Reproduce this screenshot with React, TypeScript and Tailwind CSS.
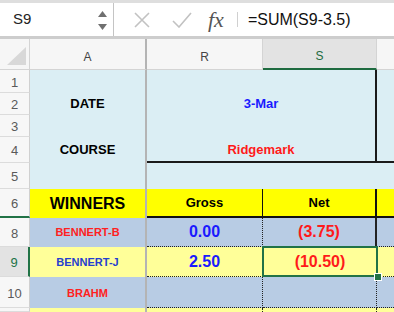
import React from "react";

function RowH({ n, row, extra = "" }: { n: string; row: string; extra?: string }) {
  return (
    <div
      className={`col-start-1 ${row} flex items-center justify-center pt-[3px] text-[13px] bg-[#f7f7f7] border-b border-b-[#dcdcdc] border-r border-r-[#d0d0d0] text-[#5a5a5a] ${extra}`}
    >
      {n}
    </div>
  );
}

export default function App() {
  return (
    <div className="w-[394px] h-[312px] overflow-hidden bg-white font-['Liberation_Sans',Arial,sans-serif]">
      {/* Formula bar */}
      <div className="h-[39px] flex border-t-[3px] border-t-[#dedede] border-b-[3px] border-b-[#cdcdcd]">
        <div className="w-[114px] flex items-center border-r border-r-[#c4c4c4] pl-[13px] pr-[6px]">
          <span className="text-[15px] text-[#222] flex-1">S9</span>
          <div className="flex flex-col gap-[7px] items-center mt-[1px]">
            <svg width="9" height="6" viewBox="0 0 9 6">
              <polygon points="4.5,0 9,6 0,6" fill="#707070" />
            </svg>
            <svg width="9" height="6" viewBox="0 0 9 6">
              <polygon points="0,0 9,0 4.5,6" fill="#707070" />
            </svg>
          </div>
        </div>
        <div className="w-[20px]" />
        <svg width="16" height="16" viewBox="0 0 16 16" className="self-center mt-[1px]">
          <path d="M1 1 L15 15 M15 1 L1 15" stroke="#c2c2c2" strokeWidth="1.6" fill="none" />
        </svg>
        <div className="w-[22px]" />
        <svg width="20" height="16" viewBox="0 0 20 16" className="self-center mt-[1px]">
          <path d="M1 9 L7 15 L19 1" stroke="#c2c2c2" strokeWidth="1.6" fill="none" />
        </svg>
        <div className="w-[16px]" />
        <span className="self-center italic text-[22px] text-[#555] font-['Liberation_Serif',serif] leading-none">fx</span>
        <div className="w-[13px]" />
        <div className="self-center w-px h-[15px] bg-[#d0d0d0]" />
        <div className="w-[10px]" />
        <span className="self-center text-[16px] text-[#111]">=SUM(S9-3.5)</span>
      </div>

      {/* Sheet */}
      <div className="grid grid-cols-[30px_117px_116px_114px_17px] grid-rows-[31px_23px_22px_22px_26px_26px_29px_29px_30px_31px_4px]">
        {/* column headers */}
        <div className="col-start-1 row-start-1 bg-[#f6f6f6] border-r border-b border-[#d4d4d4] flex items-end justify-end pr-[3px] pb-[4px]">
          <svg width="19" height="18" viewBox="0 0 19 18">
            <polygon points="19,0 19,18 0,18" fill="#d8d8d8" />
          </svg>
        </div>
        <div className="col-start-2 row-start-1 bg-[#f6f6f6] border-b border-b-[#d4d4d4] border-r-2 border-r-[#b4b4b4] flex items-center justify-center pt-[5px] text-[12px] text-[#444]">
          A
        </div>
        <div className="col-start-3 row-start-1 bg-[#f6f6f6] border-b border-r border-[#d4d4d4] flex items-center justify-center pt-[5px] text-[12px] text-[#444]">
          R
        </div>
        <div className="col-start-4 row-start-1 bg-[#e3e3e3] border-r border-r-[#d4d4d4] border-b-2 border-b-[#1e6b40] flex items-center justify-center pt-[5px] text-[12px] text-[#1e6b40]">
          S
        </div>
        <div className="col-start-5 row-start-1 bg-[#f6f6f6] border-b border-[#d4d4d4]" />

        {/* row headers */}
        <RowH n="1" row="row-start-2" />
        <RowH n="2" row="row-start-3" />
        <RowH n="3" row="row-start-4" />
        <RowH n="4" row="row-start-5" />
        <RowH n="5" row="row-start-6" />
        <RowH n="6" row="row-start-7" extra="!border-b-2 !border-b-[#217346]" />
        <RowH n="8" row="row-start-8" />
        <RowH n="9" row="row-start-9" extra="!bg-[#e3e3e3] !text-[#217346] !border-r-2 !border-r-[#217346]" />
        <RowH n="10" row="row-start-10" />
        <RowH n="" row="row-start-11" />

        {/* Column A top block */}
        <div className="col-start-2 row-start-2 bg-[#dbeef4] border-r-2 border-r-[#b4b4b4]" />
        <div className="col-start-2 row-start-3 bg-[#dbeef4] border-r-2 border-r-[#b4b4b4] flex items-center justify-center text-[13px] font-bold text-black">
          DATE
        </div>
        <div className="col-start-2 row-start-4 bg-[#dbeef4] border-r-2 border-r-[#b4b4b4]" />
        <div className="col-start-2 row-start-5 bg-[#dbeef4] border-r-2 border-r-[#b4b4b4] flex items-center justify-center text-[13px] font-bold text-black">
          COURSE
        </div>
        <div className="col-start-2 row-start-6 bg-[#dbeef4] border-r-2 border-r-[#b4b4b4]" />

        {/* R:S block rows 1-4 */}
        <div className="col-start-3 col-span-2 row-start-2 row-span-4 bg-[#dbeef4] border-r-2 border-b-2 border-[#1a1a1a]" />
        <div className="col-start-5 row-start-2 row-span-4 bg-[#dbeef4] border-b-2 border-[#1a1a1a]" />
        <div className="col-start-3 col-span-2 row-start-3 flex items-center justify-center pr-[2px] text-[13px] font-bold text-[#1a1aff]">
          3-Mar
        </div>
        <div className="col-start-3 col-span-2 row-start-5 flex items-center justify-center pr-[2px] text-[13px] font-bold text-[#ff1a1a]">
          Ridgemark
        </div>
        <div className="col-start-3 col-span-3 row-start-6 bg-[#dbeef4]" />

        {/* Row 6 */}
        <div className="col-start-2 row-start-7 bg-[#ffff00] border-r-2 border-r-[#b4b4b4] flex items-center justify-center pt-[1px] text-[16px] font-bold text-black">
          WINNERS
        </div>
        <div className="col-start-3 row-start-7 bg-[#ffff00] border-r border-b-2 border-[#111] flex items-center justify-center text-[13px] font-bold text-black">
          Gross
        </div>
        <div className="col-start-4 row-start-7 bg-[#ffff00] border-r-2 border-b-2 border-[#111] flex items-center justify-center text-[13px] font-bold text-black">
          Net
        </div>
        <div className="col-start-5 row-start-7 bg-[#ffff00] border-b-2 border-[#111]" />

        {/* Row 8 */}
        <div className="col-start-2 row-start-8 bg-[#b8cce4] border-r-2 border-r-[#b4b4b4] flex items-center justify-center text-[11px] font-bold text-[#ff2020]">
          BENNERT-B
        </div>
        <div className="col-start-3 row-start-8 bg-[#b8cce4] border-r border-b border-dotted border-[#222] flex items-center justify-center text-[16px] font-bold text-[#1a1aff]">
          0.00
        </div>
        <div className="col-start-4 row-start-8 bg-[#b8cce4] border-r-2 border-b border-[#222] [border-bottom-style:dotted] flex items-center justify-center text-[16px] font-bold text-[#ff1a1a]">
          (3.75)
        </div>
        <div className="col-start-5 row-start-8 bg-[#b8cce4] border-b border-dotted border-[#222]" />

        {/* Row 9 */}
        <div className="col-start-2 row-start-9 bg-[#ffff99] border-r-2 border-r-[#b4b4b4] flex items-center justify-center pt-[1px] text-[11px] font-bold text-[#2440d0]">
          BENNERT-J
        </div>
        <div className="col-start-3 row-start-9 bg-[#ffff99] border-r border-b border-dotted border-[#222] flex items-center justify-center text-[16px] font-bold text-[#1a1aff]">
          2.50
        </div>
        <div className="relative col-start-4 row-start-9 bg-[#ffff99] border-b border-dotted border-[#222] flex items-center justify-center text-[16px] font-bold text-[#ff1a1a]">
          (10.50)
          <div className="absolute left-[-1px] top-[-1px] right-[-1px] bottom-[-1px] border-2 border-[#217346]" />
          <div className="absolute right-[-5px] bottom-[-5px] w-[8px] h-[8px] bg-[#217346] border border-white" />
        </div>
        <div className="col-start-5 row-start-9 bg-[#ffff99] border-b border-dotted border-[#222]" />

        {/* Row 10 */}
        <div className="col-start-2 row-start-10 bg-[#b8cce4] border-r-2 border-r-[#b4b4b4] flex items-center justify-center pt-[1px] text-[11px] font-bold text-[#ff2020]">
          BRAHM
        </div>
        <div className="col-start-3 row-start-10 bg-[#b8cce4] border-r border-b border-dotted border-[#222]" />
        <div className="col-start-4 row-start-10 bg-[#b8cce4] border-r border-b border-dotted border-[#222]" />
        <div className="col-start-5 row-start-10 bg-[#b8cce4] border-b border-dotted border-[#222]" />

        {/* Row 11 */}
        <div className="col-start-2 row-start-11 bg-[#ffff99] border-r-2 border-r-[#b4b4b4]" />
        <div className="col-start-3 row-start-11 bg-[#ffff99] border-r border-dotted border-[#222]" />
        <div className="col-start-4 row-start-11 bg-[#ffff99] border-r border-dotted border-[#222]" />
        <div className="col-start-5 row-start-11 bg-[#ffff99]" />
      </div>
    </div>
  );
}
